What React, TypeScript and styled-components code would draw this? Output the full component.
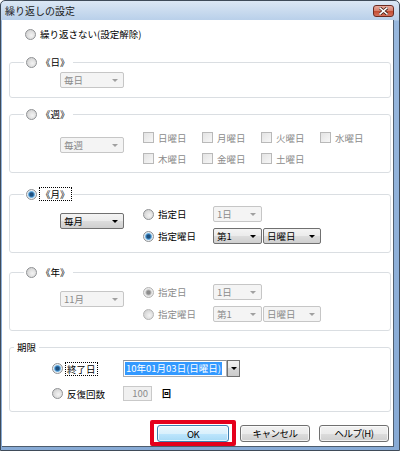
import React from "react";
import styled, { createGlobalStyle } from "styled-components";

const GlobalStyle = createGlobalStyle`
  html, body {
    margin: 0;
    padding: 0;
    background: #ffffff;
  }
  body {
    font-family: "Noto Sans CJK JP", "Noto Sans", sans-serif;
    font-size: 9.5px;
    color: #000;
  }
`;

const Window = styled.div`
  width: 400px;
  height: 451px;
  box-sizing: border-box;
  border: 1px solid #3f4b59;
  border-radius: 5px 5px 0 0;
  background: linear-gradient(to bottom, #dbe7f4 0, #b9d0ea 19px, #98b8de 20px, #87aad5 100%);
  display: flex;
  flex-direction: column;
  overflow: hidden;
`;

const TitleBar = styled.div`
  height: 19px;
  flex: none;
  display: flex;
  align-items: center;
  justify-content: space-between;
  padding: 0 5px 0 4px;
`;

const Title = styled.span`
  font-size: 10px;
  line-height: 12px;
  color: #1b1b1b;
`;

const CloseButton = styled.div`
  width: 21px;
  height: 12px;
  box-sizing: border-box;
  border: 1px solid #6b2b21;
  border-radius: 3px;
  background: linear-gradient(to bottom, #e8aa9e 0, #d7826f 45%, #c24a30 50%, #d4705a 100%);
  display: flex;
  align-items: center;
  justify-content: center;
`;

const Client = styled.div`
  flex: 1;
  min-height: 0;
  margin: 0 5px 3px 1px;
  background: #ffffff;
  border-right: 1px solid #4e5d6e;
  border-bottom: 1px solid #4e5d6e;
  padding: 8px 2px 0 7px;
  display: flex;
  flex-direction: column;
  overflow: hidden;
`;

const TopOption = styled.div`
  display: flex;
  padding-left: 16px;
  height: 12px;
`;

const Group = styled.fieldset<{ $mt: number }>`
  margin: ${(p) => p.$mt}px 0 0;
  padding: 0;
  min-width: 0;
  border: 1px solid #dadee2;
  border-radius: 3px;
`;

const Legend = styled.legend<{ $indent: number }>`
  margin-left: ${(p) => p.$indent}px;
  padding: 0 2px;
  height: 12px;
  line-height: 12px;
`;

const Option = styled.span`
  display: inline-flex;
  align-items: center;
  gap: 3px;
  height: 12px;
  white-space: nowrap;
`;

const RadioDot = styled.span<{ $on?: boolean; $dim?: boolean }>`
  flex: none;
  width: 11px;
  height: 11px;
  box-sizing: border-box;
  border-radius: 50%;
  border: 1px solid ${(p) => (p.$dim ? "#b4b4b4" : "#8f9194")};
  background: ${(p) =>
    p.$on
      ? p.$dim
        ? "radial-gradient(circle, #8c8c8c 0 1.5px, #b5b5b5 2.5px, #e9e9e9 3.5px)"
        : "radial-gradient(circle, #1f4f7c 0 1.5px, #3d86c3 2.5px, #8ec6ec 3.3px, #e6edf3 3.8px)"
      : "radial-gradient(circle at 60% 60%, #f4f4f4 0, #dedede 50%, #c8c8c8 100%)"};
`;

const CheckBox = styled.span`
  flex: none;
  width: 11px;
  height: 11px;
  box-sizing: border-box;
  border: 1px solid #b9b9b9;
  background: linear-gradient(135deg, #e3e3e3 0, #f7f7f7 100%);
`;

const Label = styled.span<{ $dim?: boolean; $focus?: boolean }>`
  color: ${(p) => (p.$dim ? "#8b8b8b" : "#000000")};
  line-height: 12px;
  outline: ${(p) => (p.$focus ? "1px dotted #000" : "none")};
  outline-offset: 0;
  padding: 0 1px;
`;

const SelectBox = styled.div<{ $w: number; $dim?: boolean }>`
  width: ${(p) => p.$w}px;
  height: 16px;
  box-sizing: border-box;
  border: 1px solid ${(p) => (p.$dim ? "#c6c6c6" : "#707070")};
  border-radius: 2px;
  background: ${(p) =>
    p.$dim ? "#f4f4f4" : "linear-gradient(to bottom, #f4f4f4 0, #ebebeb 50%, #dddddd 50%, #cfcfcf 100%)"};
  color: ${(p) => (p.$dim ? "#8b8b8b" : "#000000")};
  display: flex;
  align-items: center;
  justify-content: space-between;
  padding: 0 5px 0 3px;
  line-height: 12px;
  white-space: nowrap;
`;

const Caret = styled.span<{ $dim?: boolean }>`
  width: 0;
  height: 0;
  border-left: 3px solid transparent;
  border-right: 3px solid transparent;
  border-top: 3px solid ${(p) => (p.$dim ? "#a0a0a0" : "#000000")};
`;

const LeadSelect = styled.div`
  grid-column: 1;
  grid-row: 1 / span 2;
  align-self: center;
  margin-bottom: 8px;
`;

const WeekBody = styled.div`
  display: grid;
  grid-template-columns: 83px repeat(4, 59px);
  grid-template-rows: 13px 13px;
  row-gap: 8px;
  padding: 11px 0 7px 50px;
  align-items: center;
`;

const WeekLead = styled.div`
  grid-column: 1;
  grid-row: 1 / span 2;
  align-self: start;
  margin-top: 6px;
`;

const SingleBody = styled.div`
  padding: 4px 0 9px 50px;
`;

const PatternBody = styled.div`
  display: grid;
  grid-template-columns: 83px 70px 50px 58px;
  grid-template-rows: 16px 16px;
  row-gap: 6px;
  padding: 6px 0 8px 50px;
  align-items: center;
`;

const TermBody = styled.div`
  display: grid;
  grid-template-columns: 71px auto;
  grid-template-rows: 17px 15px;
  row-gap: 9px;
  padding: 7px 0 10px 42px;
  align-items: center;
`;

const DateCombo = styled.div`
  display: flex;
  height: 17px;
`;

const DateField = styled.div`
  width: 104px;
  box-sizing: border-box;
  border: 1px solid #abadb3;
  border-top-color: #8e9196;
  background: #fff;
  display: flex;
  align-items: center;
  padding-left: 1px;
`;

const Selected = styled.span`
  background: #3399ff;
  color: #ffffff;
  line-height: 13px;
  padding: 0 1px;
  white-space: nowrap;
`;

const DropButton = styled.div`
  width: 13px;
  box-sizing: border-box;
  border: 1px solid #707070;
  background: linear-gradient(to bottom, #f2f2f2 0, #e6e6e6 50%, #d6d6d6 50%, #cbcbcb 100%);
  display: flex;
  align-items: center;
  justify-content: center;
`;

const CountRow = styled.div`
  display: flex;
  align-items: center;
  gap: 10px;
`;

const CountField = styled.div`
  width: 29px;
  height: 15px;
  box-sizing: border-box;
  border: 1px solid #c9c9c9;
  background: #f0f0f0;
  color: #8b8b8b;
  text-align: right;
  padding-right: 3px;
  line-height: 13px;
`;

const Unit = styled.span`
  font-weight: bold;
  font-size: 9px;
  line-height: 12px;
`;

const ButtonRow = styled.div`
  display: flex;
  justify-content: flex-end;
  align-items: center;
  margin: 8px 2px 0 0;
`;

const Highlight = styled.div`
  border: 4px solid #e5001c;
  border-radius: 2px;
  padding: 1px 3px 0;
  display: flex;
`;

const Button = styled.div<{ $w: number; $default?: boolean; $ml?: number }>`
  width: ${(p) => p.$w}px;
  height: 17px;
  box-sizing: border-box;
  margin-left: ${(p) => p.$ml ?? 0}px;
  border: 1px solid ${(p) => (p.$default ? "#3c7fb1" : "#707070")};
  border-radius: 3px;
  background: ${(p) =>
    p.$default
      ? "linear-gradient(to bottom, #eaf6fd 0, #d9f0fc 50%, #bee6fd 50%, #a7d9f5 100%)"
      : "linear-gradient(to bottom, #f2f2f2 0, #ebebeb 50%, #dddddd 50%, #cfcfcf 100%)"};
  box-shadow: inset 0 0 0 1px rgba(255, 255, 255, 0.7);
  display: flex;
  align-items: center;
  justify-content: center;
  line-height: 12px;
  letter-spacing: -0.5px;
  white-space: nowrap;
`;

interface ChoiceProps {
  on?: boolean;
  dim?: boolean;
  focus?: boolean;
  children: React.ReactNode;
}

const Radio = ({ on, dim, focus, children }: ChoiceProps) => (
  <Option>
    <RadioDot $on={on} $dim={dim} />
    <Label $dim={dim} $focus={focus}>
      {children}
    </Label>
  </Option>
);

const Check = ({ children }: { children: React.ReactNode }) => (
  <Option>
    <CheckBox />
    <Label $dim>{children}</Label>
  </Option>
);

const Select = ({ w, dim, value }: { w: number; dim?: boolean; value: string }) => (
  <SelectBox $w={w} $dim={dim}>
    <span>{value}</span>
    <Caret $dim={dim} />
  </SelectBox>
);

const days = ["日曜日", "月曜日", "火曜日", "水曜日", "木曜日", "金曜日", "土曜日"];

export default function App() {
  return (
    <>
      <GlobalStyle />
      <Window>
        <TitleBar>
          <Title>繰り返しの設定</Title>
          <CloseButton>
            <svg width="9" height="8" viewBox="0 0 9 8">
              <path d="M1 1 L8 7 M8 1 L1 7" stroke="#3a1a14" strokeWidth="3" strokeLinecap="square" />
              <path d="M1 1 L8 7 M8 1 L1 7" stroke="#ffffff" strokeWidth="1.6" strokeLinecap="square" />
            </svg>
          </CloseButton>
        </TitleBar>

        <Client>
          <TopOption>
            <Radio>繰り返さない(設定解除)</Radio>
          </TopOption>

          <Group $mt={16}>
            <Legend $indent={14}>
              <Radio>《日》</Radio>
            </Legend>
            <SingleBody>
              <Select w={64} dim value="毎日" />
            </SingleBody>
          </Group>

          <Group $mt={10}>
            <Legend $indent={14}>
              <Radio>《週》</Radio>
            </Legend>
            <WeekBody>
              <WeekLead>
                <Select w={64} dim value="毎週" />
              </WeekLead>
              {days.map((d) => (
                <Check key={d}>{d}</Check>
              ))}
            </WeekBody>
          </Group>

          <Group $mt={15}>
            <Legend $indent={14}>
              <Radio on focus>
                《月》
              </Radio>
            </Legend>
            <PatternBody>
              <LeadSelect>
                <Select w={64} value="毎月" />
              </LeadSelect>
              <Radio>指定日</Radio>
              <Select w={49} dim value="1日" />
              <span />
              <Radio on>指定曜日</Radio>
              <Select w={49} value="第1" />
              <Select w={58} value="日曜日" />
            </PatternBody>
          </Group>

          <Group $mt={13}>
            <Legend $indent={14}>
              <Radio>《年》</Radio>
            </Legend>
            <PatternBody>
              <LeadSelect>
                <Select w={64} dim value="11月" />
              </LeadSelect>
              <Radio on dim>
                指定日
              </Radio>
              <Select w={49} dim value="1日" />
              <span />
              <Radio dim>指定曜日</Radio>
              <Select w={49} dim value="第1" />
              <Select w={58} dim value="日曜日" />
            </PatternBody>
          </Group>

          <Group $mt={10}>
            <Legend $indent={4}>
              <Label>期限</Label>
            </Legend>
            <TermBody>
              <Radio on focus>
                終了日
              </Radio>
              <DateCombo>
                <DateField>
                  <Selected>10年01月03日(日曜日)</Selected>
                </DateField>
                <DropButton>
                  <Caret />
                </DropButton>
              </DateCombo>
              <Radio>反復回数</Radio>
              <CountRow>
                <CountField>100</CountField>
                <Unit>回</Unit>
              </CountRow>
            </TermBody>
          </Group>

          <ButtonRow>
            <Highlight>
              <Button $w={72} $default>
                OK
              </Button>
            </Highlight>
            <Button $w={70} $ml={4}>
              キャンセル
            </Button>
            <Button $w={70} $ml={9}>
              ヘルプ(H)
            </Button>
          </ButtonRow>
        </Client>
      </Window>
    </>
  );
}
